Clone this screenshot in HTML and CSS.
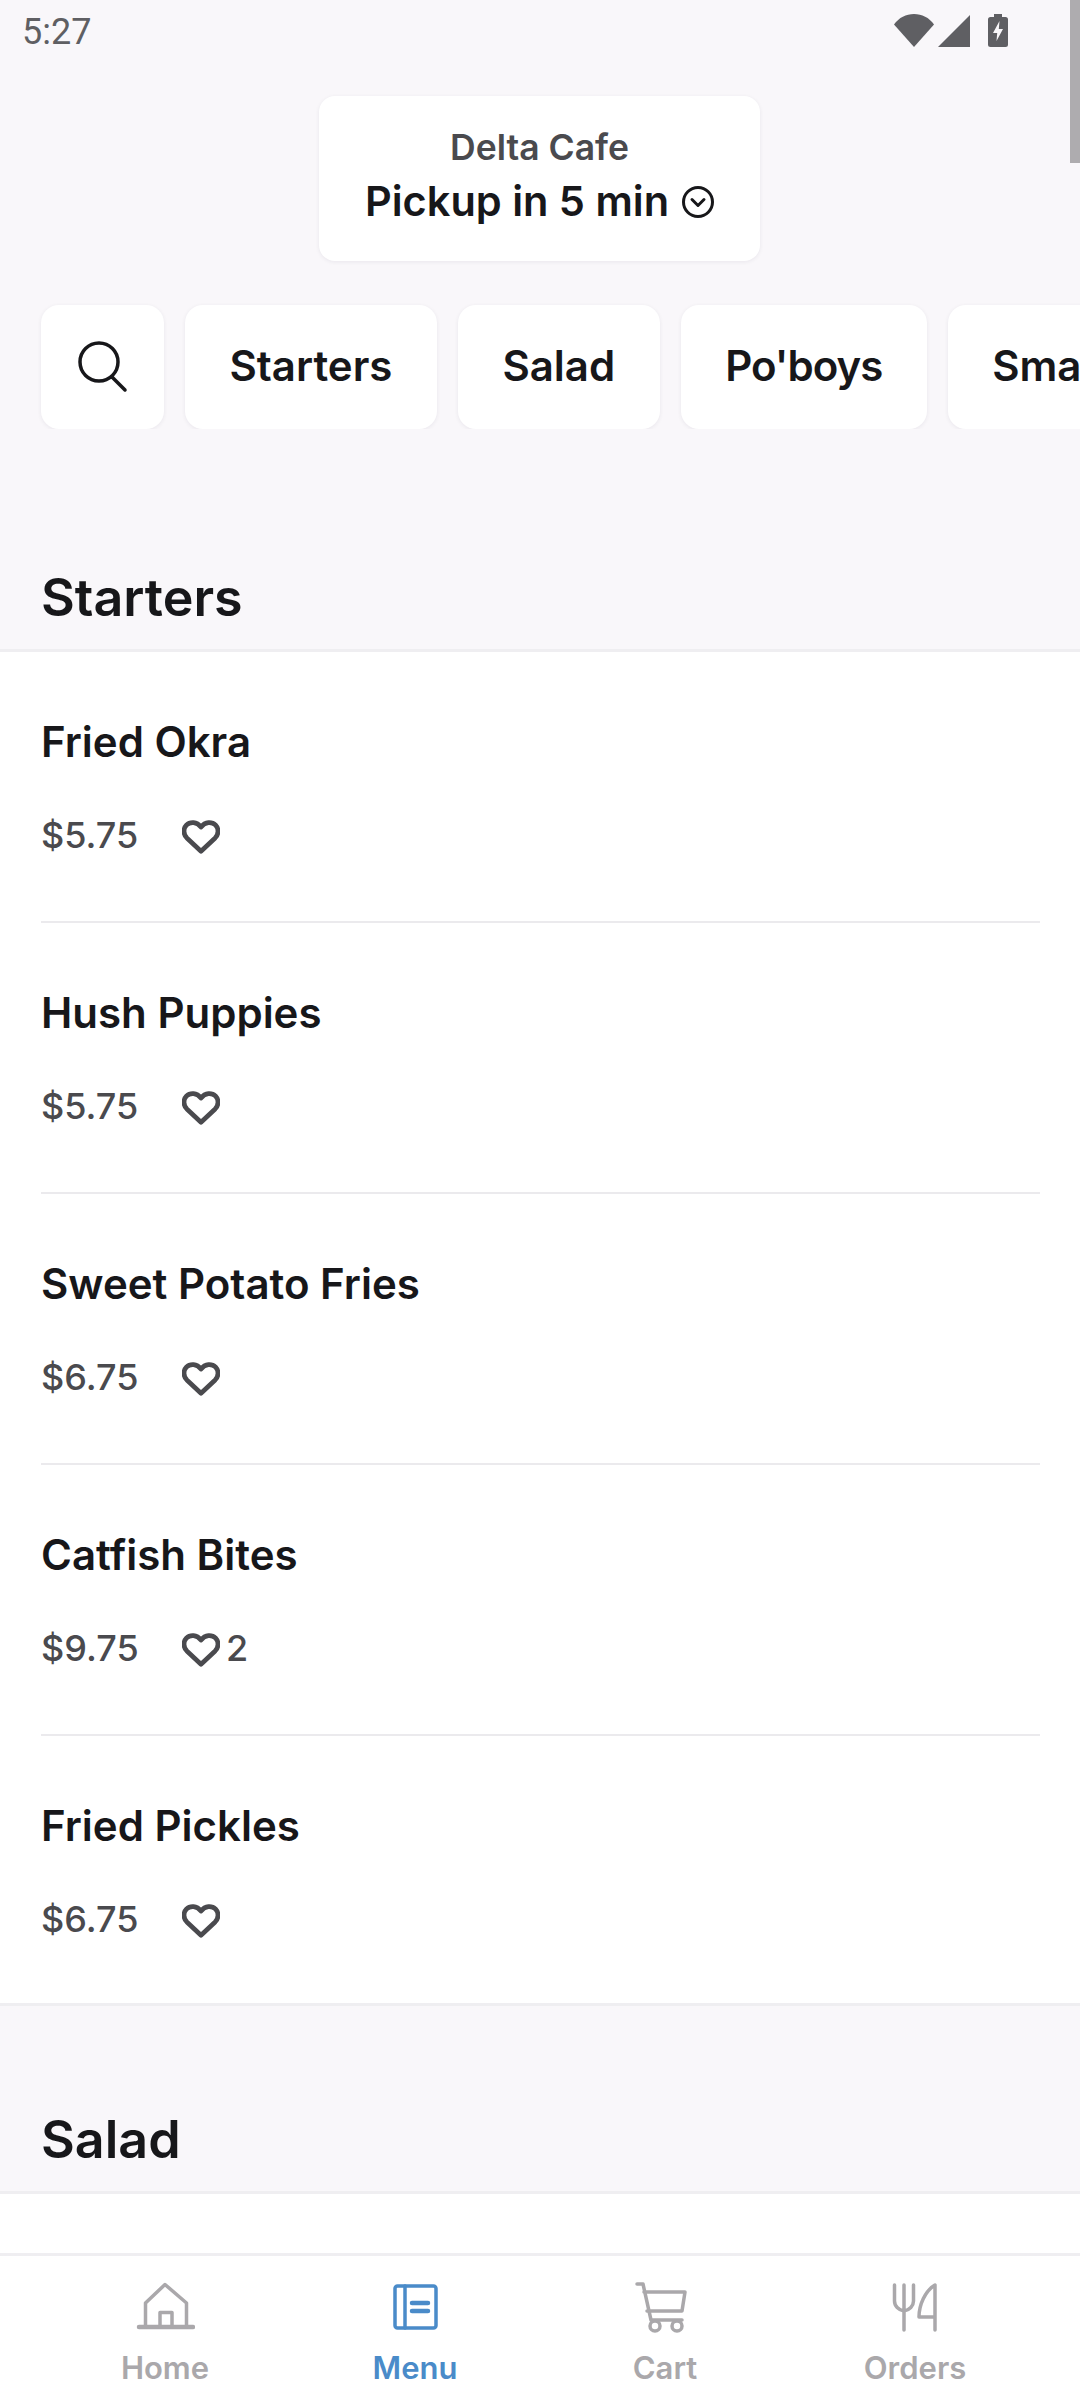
FILE: index.html
```html
<!DOCTYPE html>
<html lang="en">
<head>
<meta charset="utf-8">
<title>Delta Cafe</title>
<link rel="stylesheet" href="styles.css">
</head>
<body>
<div class="app">
  <div class="scrollbar"></div>
  <main class="content">
    <header class="status">
      <span class="time">5:27</span>
      <div class="status-icons">
        <svg class="st-wifi" viewBox="0 0 40 33" width="40" height="33"><path d="M0 10.5C5 3.5 12 0 20 0s15 3.500 20 10.500L20 33z"/></svg>
        <svg class="st-signal" viewBox="0 0 32 32" width="32" height="32"><path d="M0 32 32 0v32z"/></svg>
        <svg class="st-battery" viewBox="0 0 20 33" width="20" height="33"><path d="M6 0h8v3h3.500A2.500 2.500 0 0 1 20 5.500V30.500A2.500 2.500 0 0 1 17.500 33H2.500A2.500 2.500 0 0 1 0 30.500V5.500A2.500 2.500 0 0 1 2.500 3H6z"/><path class="bolt" d="M11.500 7 5 19h4.200L8.500 27 15 15h-4.200z"/></svg>
      </div>
    </header>

    <div class="store-wrap">
      <div class="store">
        <div class="store-name">Delta Cafe</div>
        <div class="store-time">Pickup in 5 min
          <svg class="chev" viewBox="0 0 32 32" width="32" height="32"><circle cx="16" cy="16" r="14.500"/><path d="M10 13.500l6 6 6-6"/></svg>
        </div>
      </div>
    </div>

    <nav class="cats">
      <div class="cat cat-search">
        <svg viewBox="0 0 50 50" width="50" height="50"><circle cx="21" cy="21" r="19"/><path d="M34 36l13 13"/></svg>
      </div>
      <div class="cat">Starters</div>
      <div class="cat">Salad</div>
      <div class="cat cat-tight">Po'boys</div>
      <div class="cat">Small Plates</div>
    </nav>

    <section class="section">
      <h2 class="section-title section-first">Starters</h2>
      <div class="list">
        <article class="item">
          <h3 class="item-name">Fried Okra</h3>
          <div class="item-meta"><span class="price">$5.75</span>
            <svg class="heart" viewBox="0 0 40 36" width="38" height="34"><path d="M20 33 5 19C1 15 1.200 9 4.500 5.500 8.500 1.500 15.500 1.500 20 7.500 24.500 1.500 31.500 1.500 35.500 5.500 38.800 9 39 15 35 19z"/></svg>
          </div>
        </article>
        <article class="item">
          <h3 class="item-name">Hush Puppies</h3>
          <div class="item-meta"><span class="price">$5.75</span>
            <svg class="heart" viewBox="0 0 40 36" width="38" height="34"><path d="M20 33 5 19C1 15 1.200 9 4.500 5.500 8.500 1.500 15.500 1.500 20 7.500 24.500 1.500 31.500 1.500 35.500 5.500 38.800 9 39 15 35 19z"/></svg>
          </div>
        </article>
        <article class="item">
          <h3 class="item-name">Sweet Potato Fries</h3>
          <div class="item-meta"><span class="price">$6.75</span>
            <svg class="heart" viewBox="0 0 40 36" width="38" height="34"><path d="M20 33 5 19C1 15 1.200 9 4.500 5.500 8.500 1.500 15.500 1.500 20 7.500 24.500 1.500 31.500 1.500 35.500 5.500 38.800 9 39 15 35 19z"/></svg>
          </div>
        </article>
        <article class="item">
          <h3 class="item-name">Catfish Bites</h3>
          <div class="item-meta"><span class="price">$9.75</span>
            <svg class="heart" viewBox="0 0 40 36" width="38" height="34"><path d="M20 33 5 19C1 15 1.200 9 4.500 5.500 8.500 1.500 15.500 1.500 20 7.500 24.500 1.500 31.500 1.500 35.500 5.500 38.800 9 39 15 35 19z"/></svg>
            <span class="likes">2</span>
          </div>
        </article>
        <article class="item item-last">
          <h3 class="item-name">Fried Pickles</h3>
          <div class="item-meta"><span class="price">$6.75</span>
            <svg class="heart" viewBox="0 0 40 36" width="38" height="34"><path d="M20 33 5 19C1 15 1.200 9 4.500 5.500 8.500 1.500 15.500 1.500 20 7.500 24.500 1.500 31.500 1.500 35.500 5.500 38.800 9 39 15 35 19z"/></svg>
          </div>
        </article>
      </div>
    </section>

    <section class="section">
      <h2 class="section-title">Salad</h2>
      <div class="list list-open"></div>
    </section>
  </main>

  <footer class="tabs">
    <div class="tab">
      <svg viewBox="0 0 60 52" width="60" height="52"><path class="tab-base" d="M4 46h54"/><path d="M10.500 46V22L30 3.500 51.500 22v24M25 46V31.500h12V46"/></svg>
      <span>Home</span>
    </div>
    <div class="tab tab-active">
      <svg viewBox="0 0 60 52" width="60" height="52"><rect x="10" y="5" width="41" height="42" rx="2.500"/><path d="M20 5v42"/><path class="tab-bars" d="M27 22h16M27 30h16"/></svg>
      <span>Menu</span>
    </div>
    <div class="tab">
      <svg viewBox="0 0 60 52" width="60" height="52"><path d="M2 3h6l8 36h31M9 11h41l-3 19H12"/><circle cx="20" cy="45" r="5"/><circle cx="42" cy="45" r="5"/></svg>
      <span>Cart</span>
    </div>
    <div class="tab">
      <svg viewBox="0 0 60 52" width="60" height="52"><path d="M9.500 4v16c0 5 4 9 9.500 10 5.500-1 9.500-5 9.500-10V4M19 4v45M50 36H34c0-12 6-26 16-32v45"/></svg>
      <span>Orders</span>
    </div>
  </footer>
</div>
</body>
</html>
```

FILE: styles.css
```css
* { box-sizing: border-box; }
html, body { margin: 0; padding: 0; }
body { width: 1080px; height: 2400px; overflow: hidden; background: #f9f7fa; font-family: Inter, "Liberation Sans", sans-serif; color: #17171a; }

.app { position: relative; width: 1080px; height: 2400px; display: flex; flex-direction: column; }
.scrollbar { position: absolute; top: 0; right: 0; width: 10px; height: 163px; background: #aeacaf; }
.content { flex: 1; min-height: 0; overflow: hidden; }

.status { height: 66px; padding: 12px 72px 0 22px; display: flex; justify-content: space-between; }
.time { font-family: Roboto, sans-serif; font-size: 36px; line-height: 41px; color: #5f5f63; }
.status-icons { display: flex; align-items: flex-start; padding-top: 2px; }
.status-icons svg { fill: #5f5f63; }
.st-signal { margin: 1px 18px 0 4px; }
.status-icons .bolt { fill: #f9f7fa; }

.store-wrap { display: flex; justify-content: center; padding-top: 30px; margin-right: 1px; }
.store { width: 441px; height: 165px; background: #fff; border-radius: 16px; box-shadow: 0 1px 4px rgba(30, 20, 50, .07); display: flex; flex-direction: column; align-items: center; padding-top: 30px; }
.store-name { font-size: 35.500px; line-height: 44px; font-weight: 600; color: #4a4a4e; }
.store-time { margin-top: 6px; font-size: 41.500px; line-height: 50px; font-weight: 600; color: #17171a; display: flex; align-items: center; gap: 13px; white-space: nowrap; }
.chev { fill: none; stroke: #17171a; stroke-width: 3; stroke-linecap: round; stroke-linejoin: round; margin-top: 2px; }

.cats { display: flex; gap: 21px; padding: 44px 0 0 41px; height: 168px; width: 1080px; overflow: hidden; }
.cat { flex: none; height: 124px; padding: 0 44.500px 3px; background: #fff; border-radius: 18px; box-shadow: 0 1px 4px rgba(30, 20, 50, .07); display: flex; align-items: center; font-size: 42px; line-height: 50px; font-weight: 600; white-space: nowrap; }
.cat-tight { letter-spacing: -1px; }
.cat-search { padding: 0 37px 2px; width: 123px; }
.cat-search svg { fill: none; stroke: #17171a; stroke-width: 3.5; overflow: visible; stroke-linecap: round; }

.section-title { margin: 0; padding: 103px 41px 0; height: 185px; font-size: 52px; line-height: 62px; font-weight: 600; color: #17171a; }
.section-first { height: 220px; padding-top: 138px; }

.list { background: #fff; border-top: 3px solid #efeef1; border-bottom: 3px solid #efeef1; }
.list-open { height: 70px; border-bottom: 0; }

.item { height: 271px; margin: 0 40px 0 41px; border-bottom: 2px solid #ebeaed; padding-top: 66px; }
.item-last { height: 267px; border-bottom: 0; }
.item-name { margin: 0; font-size: 42px; line-height: 48px; font-weight: 600; color: #17171a; }
.item-meta { margin-top: 47px; display: flex; align-items: center; height: 44px; }
.price { font-size: 36px; line-height: 44px; font-weight: 500; color: #4a4a4e; width: 141px; }
.heart { fill: none; stroke: #4a4a4e; stroke-width: 5; stroke-linejoin: round; margin-top: 3px; }
.likes { margin-left: 6px; font-size: 36px; line-height: 44px; font-weight: 500; color: #4a4a4e; }

.tabs { flex: none; height: 147px; background: #fff; border-top: 3px solid #efeef1; padding: 25px 40px 0; display: grid; grid-template-columns: repeat(4, 250px); }
.tab { display: flex; flex-direction: column; align-items: center; color: #aaa8ab; font-size: 31px; line-height: 36px; font-weight: 600; gap: 17px; }
.tab svg { fill: none; stroke: currentColor; stroke-width: 3.500; stroke-linecap: round; stroke-linejoin: round; }
.tab-active { color: #4a8bc9; }
.tab-bars { stroke-width: 4.500; }
.tab-base { stroke-width: 4.500; }
```
